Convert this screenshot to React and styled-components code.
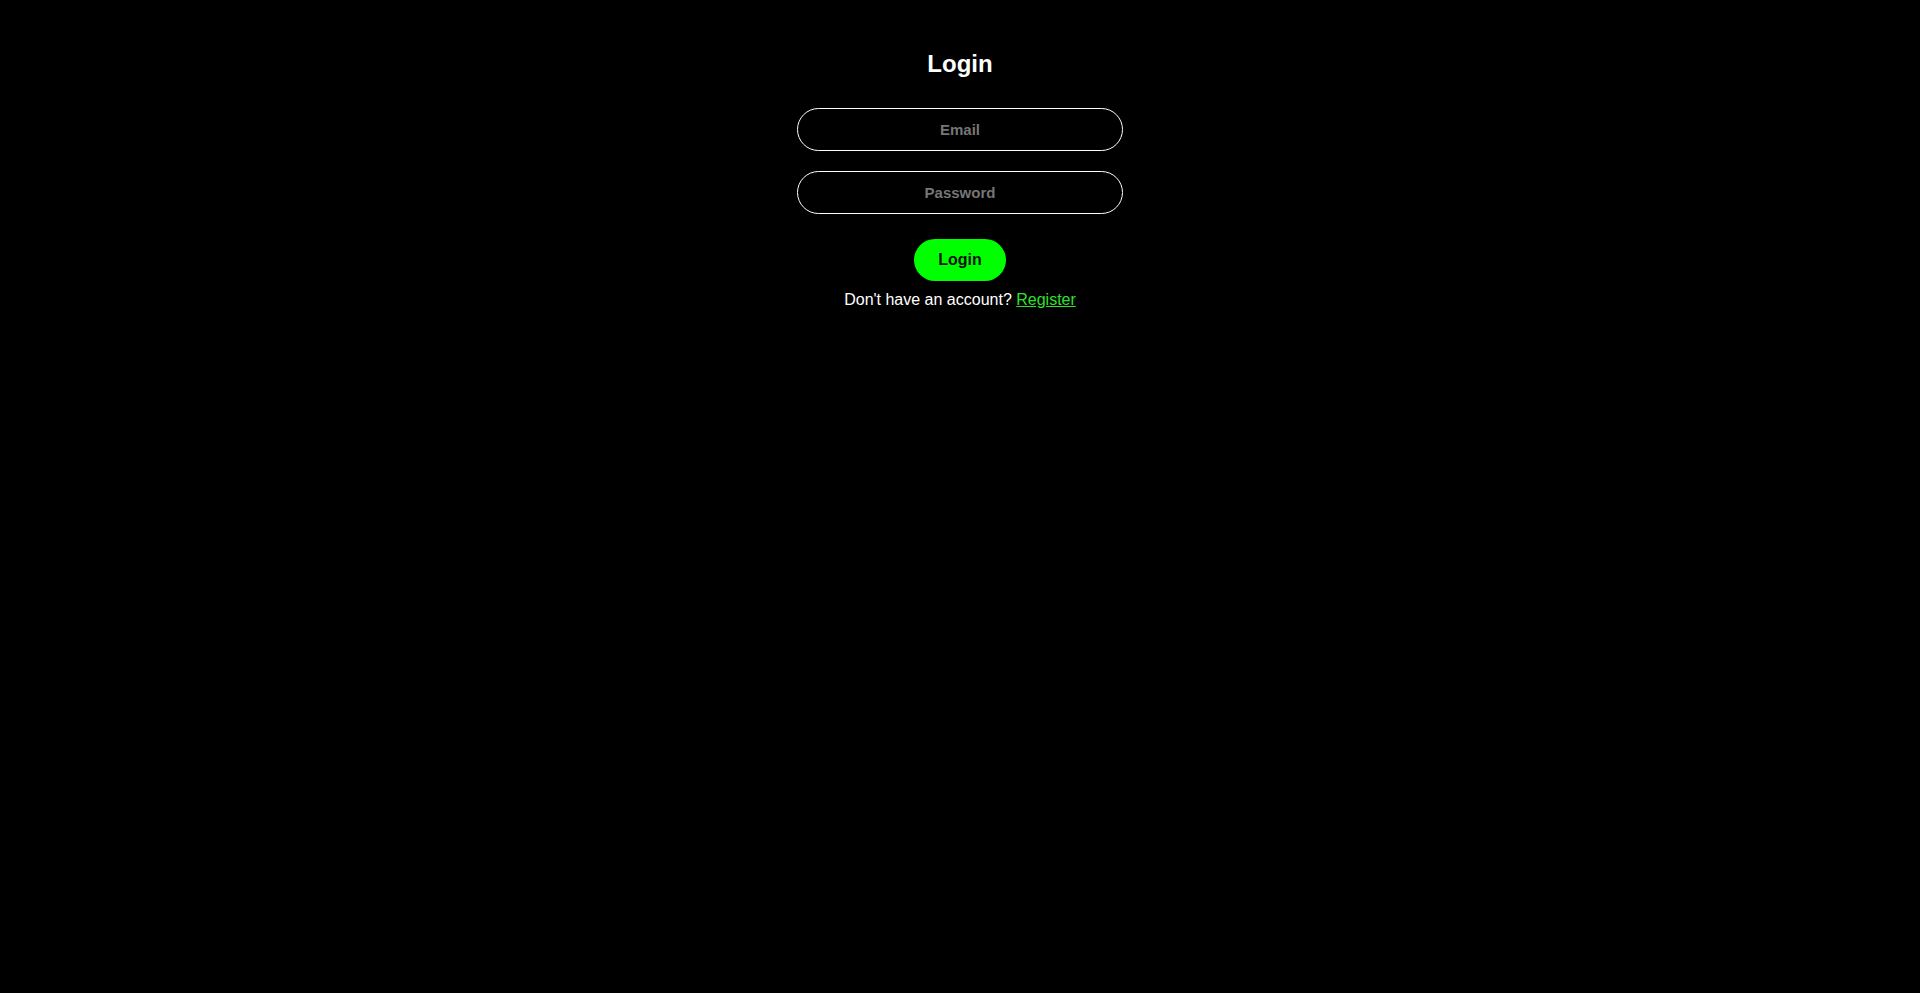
import React from "react";
import styled, { createGlobalStyle } from "styled-components";

const Global = createGlobalStyle`
  html, body { margin: 0; padding: 0; background: #000; }
  body { font-family: "Liberation Sans", Arial, sans-serif; color: #fff; min-height: 993px; }
`;

const Page = styled.div`
  display: flex;
  flex-direction: column;
  align-items: center;
  padding-top: 30px;
`;

const Title = styled.h2`
  font-size: 24px;
  font-weight: bold;
  margin: 20px 0 30px;
  line-height: 27.6px;
  color: #fff;
`;

const Form = styled.form`
  display: flex;
  flex-direction: column;
  align-items: center;
`;

const Input = styled.input`
  box-sizing: border-box;
  width: 326px;
  height: 43px;
  margin-bottom: ${(p) => p.$mb}px;
  border: 1px solid #ffffff;
  border-radius: 22px;
  background: #000;
  color: #fff;
  text-align: center;
  font-family: "Liberation Sans", Arial, sans-serif;
  font-size: 15px;
  font-weight: bold;
  outline: none;
  &::placeholder { color: #767676; }
`;

const Button = styled.button`
  box-sizing: border-box;
  height: 42px;
  padding: 0 24px;
  border: none;
  border-radius: 21px;
  background: #00ff00;
  color: #111;
  font-family: "Liberation Sans", Arial, sans-serif;
  font-size: 16px;
  font-weight: bold;
  cursor: pointer;
`;

const Note = styled.p`
  margin: 10px 0 0;
  font-size: 16px;
  line-height: 18.4px;
  color: #fff;
`;

const Link = styled.a`
  color: #2ee02e;
  text-decoration: underline;
`;

export default function App() {
  return (
    <>
      <Global />
      <Page>
        <Title>Login</Title>
        <Form onSubmit={(e) => e.preventDefault()}>
          <Input type="email" placeholder="Email" $mb={20} />
          <Input type="password" placeholder="Password" $mb={25} />
          <Button type="submit">Login</Button>
        </Form>
        <Note>
          Don't have an account? <Link href="#">Register</Link>
        </Note>
      </Page>
    </>
  );
}
